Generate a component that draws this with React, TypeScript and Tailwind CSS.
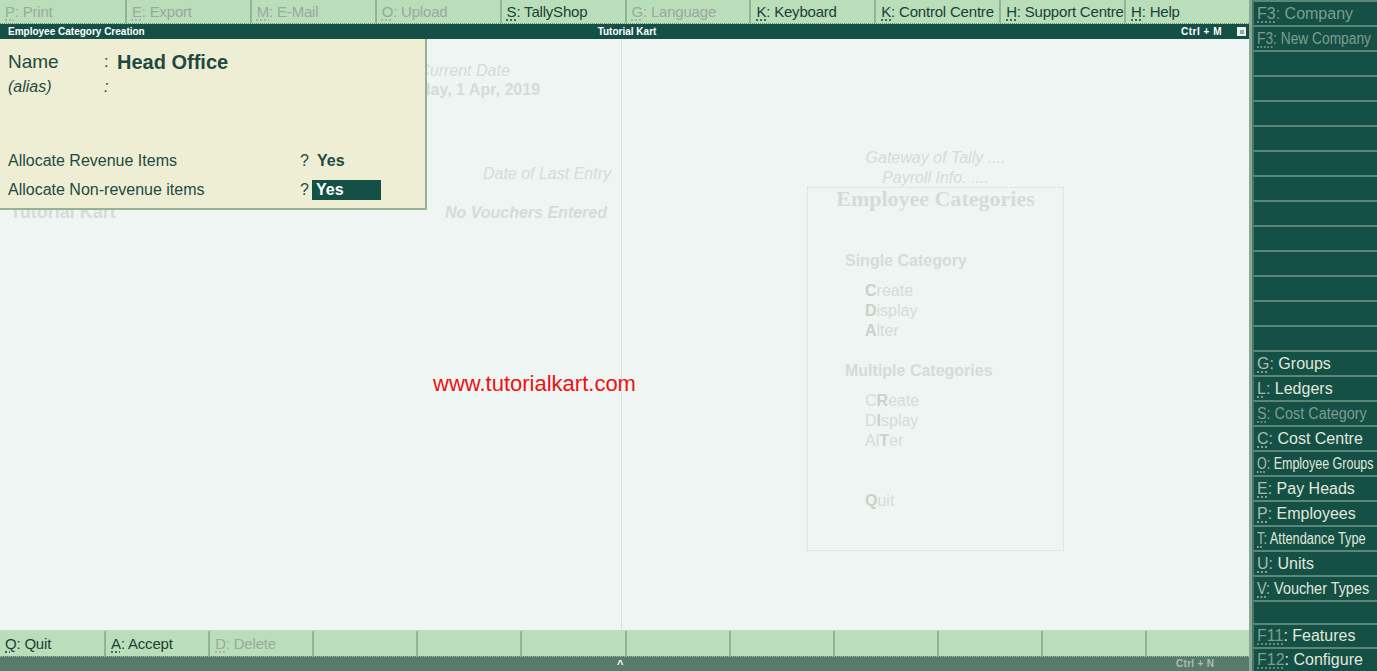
import React from 'react';

const font = { fontFamily: '"Liberation Sans", Arial, sans-serif' };

type Key = { k: string; label: string; off?: boolean };

const topKeys: Key[] = [
  { k: 'P', label: 'Print', off: true },
  { k: 'E', label: 'Export', off: true },
  { k: 'M', label: 'E-Mail', off: true },
  { k: 'O', label: 'Upload', off: true },
  { k: 'S', label: 'TallyShop' },
  { k: 'G', label: 'Language', off: true },
  { k: 'K', label: 'Keyboard' },
  { k: 'K', label: 'Control Centre' },
  { k: 'H', label: 'Support Centre' },
  { k: 'H', label: 'Help' },
];

const bottomKeys: (Key | null)[] = [
  { k: 'Q', label: 'Quit' },
  { k: 'A', label: 'Accept' },
  { k: 'D', label: 'Delete', off: true },
  null, null, null, null, null, null, null, null, null,
];

type Side = { k?: string; label?: string; off?: boolean; sx?: string; fn?: boolean };

const sideRows: Side[] = [
  { k: 'F3', label: 'Company', off: true, fn: true },
  { k: 'F3', label: 'New Company', off: true, fn: true, sx: 'scale-x-[0.86]' },
  {}, {}, {}, {}, {}, {}, {}, {}, {}, {}, {}, {},
  { k: 'G', label: 'Groups' },
  { k: 'L', label: 'Ledgers' },
  { k: 'S', label: 'Cost Category', off: true, sx: 'scale-x-[0.9]' },
  { k: 'C', label: 'Cost Centre' },
  { k: 'O', label: 'Employee Groups', sx: 'scale-x-[0.78]' },
  { k: 'E', label: 'Pay Heads' },
  { k: 'P', label: 'Employees' },
  { k: 'T', label: 'Attendance Type', sx: 'scale-x-[0.8]' },
  { k: 'U', label: 'Units' },
  { k: 'V', label: 'Voucher Types', sx: 'scale-x-[0.9]' },
];

const KeyButton: React.FC<{ item: Key | null; first?: boolean }> = ({ item, first }) => (
  <div className={`flex items-center h-full pl-[5px] whitespace-nowrap overflow-hidden ${first ? '' : 'border-l-2 border-[#93b493]'}`}>
    {item && (
      <span className={`text-[15px] tracking-[-0.2px] leading-none ${item.off ? 'text-[#9ca89c]' : 'text-[#1c4137]'}`}>
        <span className="underline decoration-dotted underline-offset-[3px]">{item.k}</span>: {item.label}
      </span>
    )}
  </div>
);

const SideRow: React.FC<{ row: Side; h?: string }> = ({ row, h = 'h-[25px]' }) => (
  <div className={`${h} border-t-2 border-[#5c8676] border-l-2 border-l-[#4c7565] flex items-center pl-[3px] whitespace-nowrap overflow-hidden`}>
    {row.label && (
      <span
        className={`inline-block origin-left leading-none text-[16px] ${row.sx ?? ''} ${row.off ? 'text-[#7f9d8e]' : 'text-[#e2e8da]'}`}
      >
        <span className={`underline decoration-dotted underline-offset-[3px] ${row.fn || row.off ? 'text-[#7f9d8e]' : 'text-[#a9bcae]'}`}>{row.k}</span>
        <span className={row.fn || row.off ? '' : 'text-[#a9bcae]'}>:</span> {row.label}
      </span>
    )}
  </div>
);

const Faded: React.FC<{ children: React.ReactNode; className?: string }> = ({ children, className = '' }) => (
  <div className={`text-[#d3ddd6] ${className}`}>{children}</div>
);

const Hot: React.FC<{ children: React.ReactNode }> = ({ children }) => (
  <span className="text-[#c7d2c9] font-bold">{children}</span>
);

export default function App() {
  return (
    <div className="w-[1377px] h-[671px] flex bg-[#eef5f3] overflow-hidden" style={font}>
      {/* main column */}
      <div className="w-[1249px] flex flex-col">
        <div className="h-[24px] grid grid-cols-10 bg-[#b9deb9] border-b border-dotted border-[#6f8f7f]">
          {topKeys.map((t, i) => (
            <KeyButton key={i} item={t} first={i === 0} />
          ))}
        </div>

        <div className="h-[15px] bg-[#145046] flex items-center text-white font-bold text-[10px] leading-none pl-[8px] pr-[3px]">
          <div className="flex-1">Employee Category Creation</div>
          <div className="flex-1 text-center">Tutorial Kart</div>
          <div className="flex-1 flex justify-end items-center gap-[15px]">
            <span className="tracking-[0.5px]">Ctrl + M</span>
            <span className="w-[9px] h-[9px] bg-[#e9efe9] flex items-center justify-center">
              <span className="w-[4px] h-[4px] bg-[#9aa89a]" />
            </span>
          </div>
        </div>

        <div className="flex-1 relative flex">
          {/* left half */}
          <div className="w-[622px] border-r border-[#d8e2dd] px-[10px] pt-[22px]">
            <div className="flex">
              <Faded className="w-[374px] text-[16px] italic">Current Period</Faded>
              <div className="w-[160px] text-center">
                <Faded className="text-[16px] italic leading-[19px]">Current Date</Faded>
                <Faded className="text-[16px] font-bold leading-[19px]">Monday, 1 Apr, 2019</Faded>
              </div>
            </div>
            <div className="flex justify-between mt-[63px] pr-[0px] text-[16px] italic">
              <Faded>Name of Company</Faded>
              <Faded>Date of Last Entry</Faded>
            </div>
            <div className="flex justify-between items-center mt-[13px] pr-[4px]">
              <Faded className="text-[18px] font-bold">Tutorial Kart</Faded>
              <Faded className="text-[16px] font-bold italic">No Vouchers Entered</Faded>
            </div>
          </div>

          {/* right half */}
          <div className="flex-1 flex flex-col items-center pt-[109px]">
            <Faded className="text-[16px] italic leading-[20px]">Gateway of Tally ....</Faded>
            <Faded className="text-[16px] italic leading-[19px]">Payroll Info. ....</Faded>
            <div className="w-[257px] h-[364px] border border-dotted border-[#d0dad3] flex flex-col">
              <div
                className="text-center text-[22px] font-bold text-[#d3ddd6] leading-[22px]"
                style={{ fontFamily: '"Liberation Serif", "Times New Roman", serif' }}
              >
                Employee Categories
              </div>
              <div className="pl-[37px] pt-[41px] text-[16px] leading-[20px]">
                <Faded className="font-bold">Single Category</Faded>
                <div className="pl-[20px] pt-[10px]">
                  <Faded><Hot>C</Hot>reate</Faded>
                  <Faded><Hot>D</Hot>isplay</Faded>
                  <Faded><Hot>A</Hot>lter</Faded>
                </div>
                <Faded className="font-bold pt-[20px]">Multiple Categories</Faded>
                <div className="pl-[20px] pt-[10px]">
                  <Faded>C<Hot>R</Hot>eate</Faded>
                  <Faded>D<Hot>I</Hot>splay</Faded>
                  <Faded>Al<Hot>T</Hot>er</Faded>
                  <Faded className="pt-[40px]"><Hot>Q</Hot>uit</Faded>
                </div>
              </div>
            </div>
          </div>

          {/* watermark */}
          <div className="absolute left-[433px] top-[331px] text-[22px] leading-[28px] text-[#ee1111]">www.tutorialkart.com</div>

          {/* creation panel */}
          <div className="absolute left-0 top-0 w-[427px] h-[171px] bg-[#eeeed5] border-r-2 border-b-2 border-[#93b393] text-[#1f4a40] pl-[8px] pt-[11px]">
            <div className="flex items-center h-[24px]">
              <span className="w-[96px] text-[19px]">Name</span>
              <span className="text-[16px] w-[13px]">:</span>
              <span className="text-[20px] font-bold">Head Office</span>
            </div>
            <div className="flex items-center h-[21px] mt-[2px] text-[16px] italic">
              <span className="w-[96px]">(alias)</span>
              <span className="text-[16px]">:</span>
            </div>
            <div className="flex items-center h-[20px] mt-[54px] text-[16px]">
              <span className="w-[292px]">Allocate Revenue Items</span>
              <span className="w-[17px]">?</span>
              <span className="font-bold">Yes</span>
            </div>
            <div className="flex items-center h-[20px] mt-[9px] text-[16px]">
              <span className="w-[292px]">Allocate Non-revenue items</span>
              <span className="w-[12px]">?</span>
              <span className="w-[69px] h-[20px] bg-[#145046] text-white font-bold pl-[4px] flex items-center">Yes</span>
            </div>
          </div>
        </div>

        <div className="h-[26px] grid grid-cols-12 bg-[#b9deb9] border-t border-dotted border-[#c9d6cc]">
          {bottomKeys.map((b, i) => (
            <KeyButton key={i} item={b} first={i === 0} />
          ))}
        </div>
        <div className="h-[15px] bg-[#587b6c] border-t border-dotted border-[#9fb5a8] flex items-center relative text-[10px] font-bold leading-none">
          <span className="absolute left-[617px] text-white text-[11px]">^</span>
          <span className="absolute left-[1176px] text-[#aebdb2] tracking-[0.3px]">Ctrl + N</span>
        </div>
      </div>

      {/* right button panel */}
      <div className="w-[128px] bg-[#145046] border-l-[3px] border-[#8aa898] flex flex-col">
        {sideRows.map((r, i) => (
          <SideRow key={i} row={r} />
        ))}
        <SideRow row={{}} h="h-[23px]" />
        <SideRow row={{ k: 'F11', label: 'Features', fn: true }} h="h-[24px]" />
        <SideRow row={{ k: 'F12', label: 'Configure', fn: true }} h="h-[24px]" />
      </div>
    </div>
  );
}
